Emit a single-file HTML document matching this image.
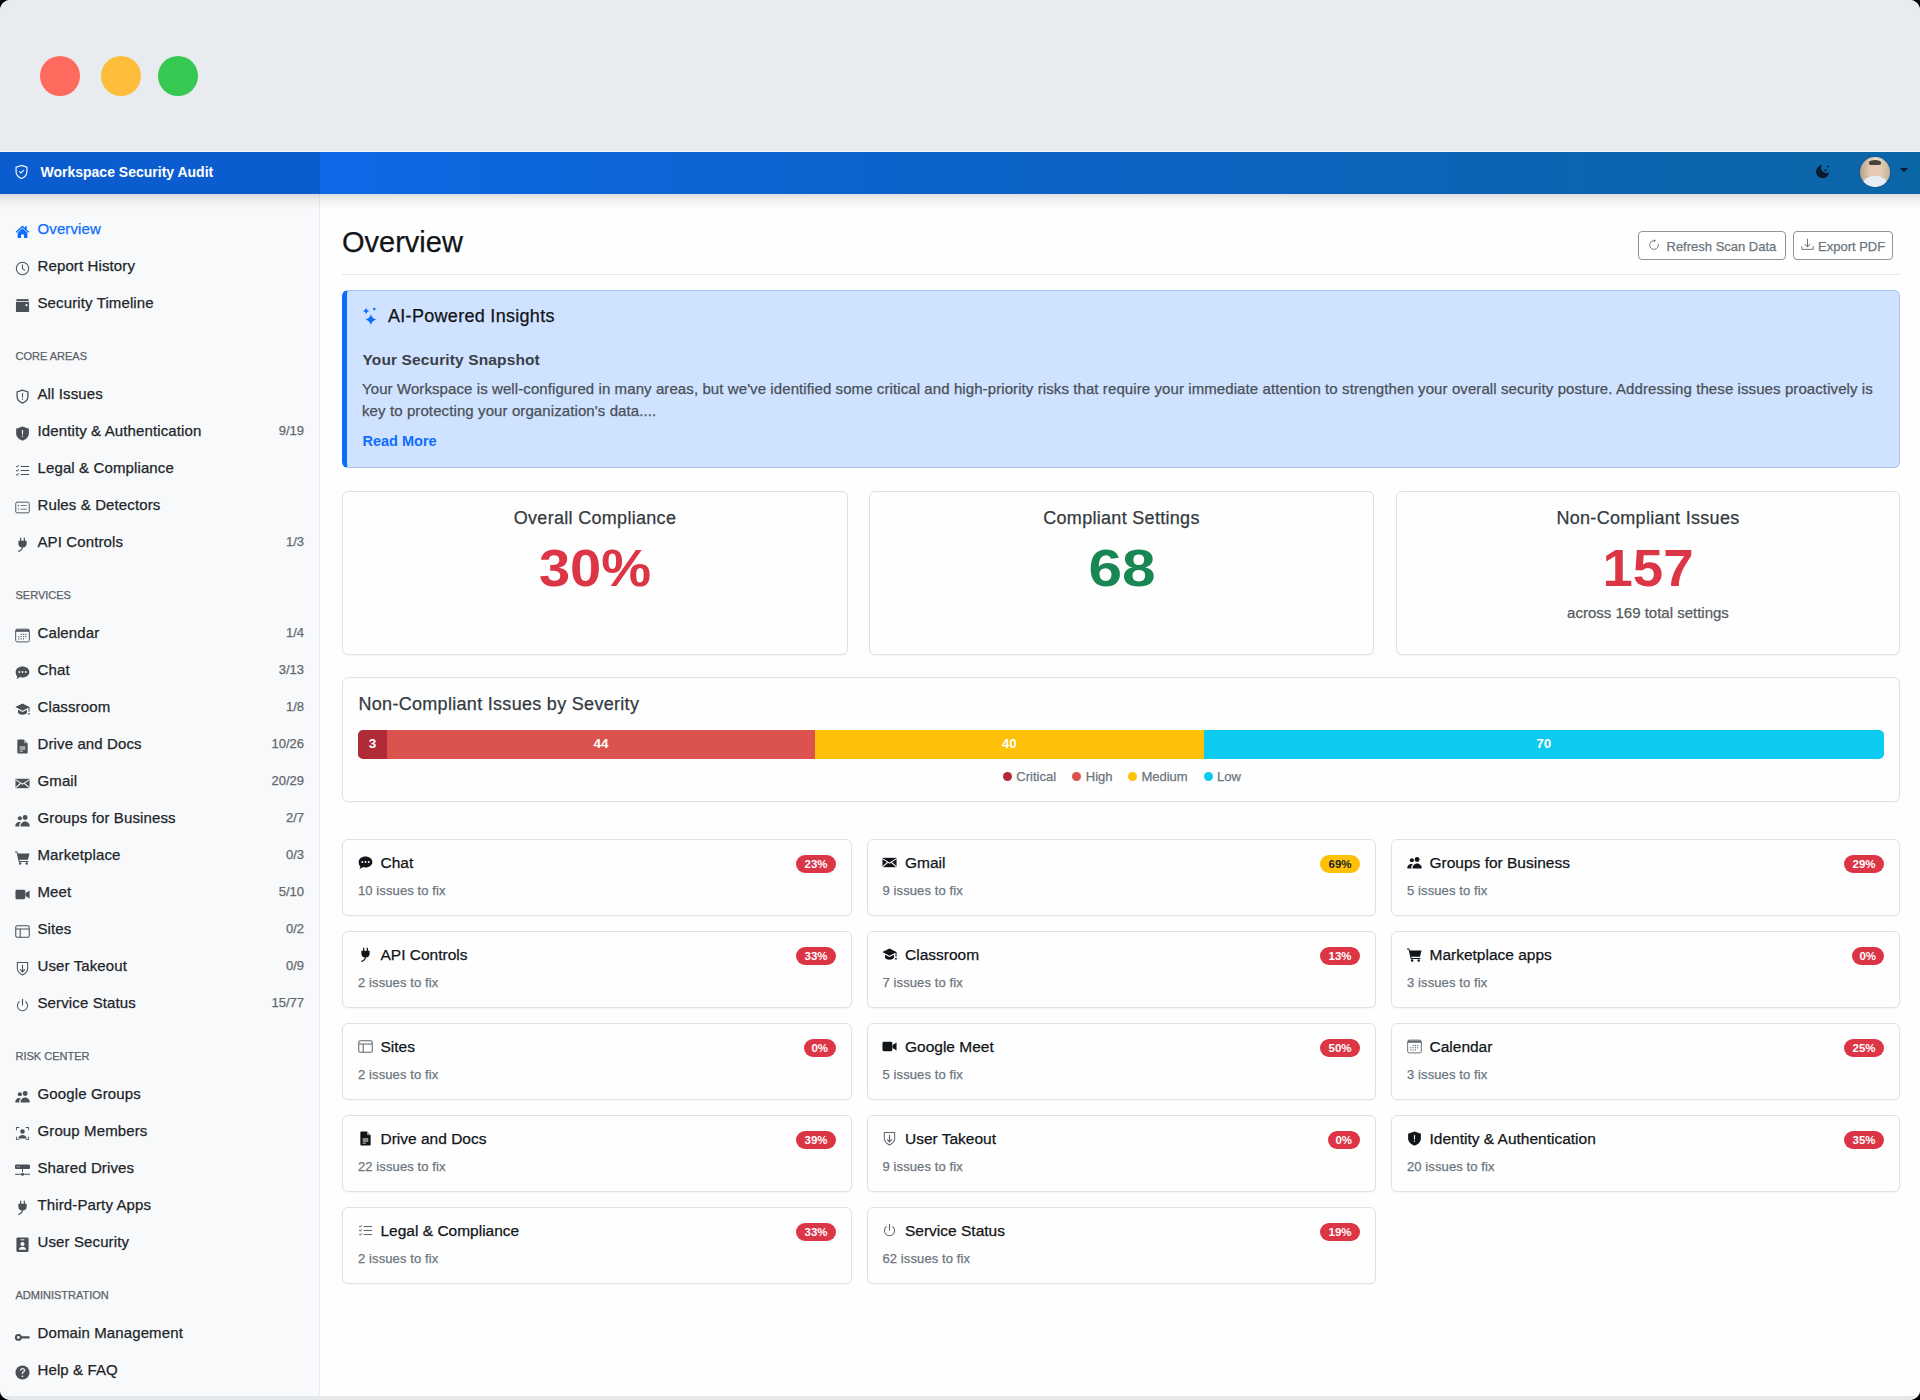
<!DOCTYPE html>
<html><head><meta charset="utf-8"><title>Workspace Security Audit</title>
<style>
*{margin:0;padding:0;box-sizing:content-box;}
html,body{width:1920px;height:1400px;overflow:hidden;background:#000;}
body{font-family:"Liberation Sans", sans-serif;}
.win{position:absolute;left:0;top:0;width:1920px;height:1400px;border-radius:10px;overflow:hidden;background:#fff;}
.t{position:absolute;white-space:nowrap;-webkit-text-stroke:0.25px currentColor;}
.b{position:absolute;}
.i{position:absolute;overflow:visible;}
</style></head><body>
<div class="win">
<div class="b" style="left:0px;top:0px;width:1920px;height:152px;background:#e8ebef;"></div>
<div class="b" style="left:39.7px;top:55.5px;width:40px;height:40px;border-radius:50%;background:#ff6a5f;"></div>
<div class="b" style="left:101.2px;top:55.5px;width:40px;height:40px;border-radius:50%;background:#febe3c;"></div>
<div class="b" style="left:157.9px;top:55.5px;width:40px;height:40px;border-radius:50%;background:#35c852;"></div>
<div class="b" style="left:0px;top:193px;width:319px;height:1203px;background:#f8f9fa;"></div>
<div class="b" style="left:319px;top:193px;width:1.5px;height:1203px;background:#eaecef;"></div>
<div class="b" style="left:320px;top:193px;width:1600px;height:1203px;background:#fefefe;"></div>
<div class="b" style="left:0px;top:1396px;width:1920px;height:4px;background:#e6e9ec;"></div>
<div class="b" style="left:0px;top:150.5px;width:1920px;height:1.5px;background:#f6f7f9;"></div>
<div class="b" style="left:0px;top:152px;width:1920px;height:41.5px;background:linear-gradient(90deg,#0d6cf5 0%,#0b63cc 45%,#0b66a6 100%);"></div>
<div class="b" style="left:0px;top:152px;width:319px;height:41.5px;background:#0b5dcf;"></div>
<div class="b" style="left:0px;top:193.5px;width:1920px;height:16px;background:linear-gradient(rgba(0,0,0,.13),rgba(0,0,0,.06) 30%,rgba(0,0,0,0));"></div>
<div class="b" style="left:319px;top:152px;width:1px;height:41.5px;background:rgba(0,0,0,.12);"></div>
<svg class="i" style="left:14px;top:164px;width:15px;height:16px;color:#ffffff;" viewBox="0 0 16 16" fill="currentColor"><path d="M8 1 2.2 2.9v4.6c0 3.5 2.5 6.1 5.8 7.5 3.3-1.4 5.8-4 5.8-7.5V2.9z" fill="none" stroke="currentColor" stroke-width="1.2"/><path d="M5.2 7.8l.8-.8 1.3 1.3 2.8-2.8.8.8-3.6 3.6z"/></svg>
<div class="t" style="left:40.5px;top:165.05px;font-size:14px;line-height:14px;color:#ffffff;font-weight:bold;letter-spacing:0px;-webkit-text-stroke:0;">Workspace Security Audit</div>
<svg class="i" style="left:1814.5px;top:163px;width:16px;height:16px;color:#0b1a2e;" viewBox="0 0 16 16" fill="currentColor"><path d="M7.19 2.01A6.6 6.6 0 1 0 14.19 9.01A5 5 0 0 1 7.19 2.01Z"/><path d="M10.4 5.4Q10.65 6.95 12.2 7.2Q10.65 7.45 10.4 9Q10.15 7.45 8.6 7.2Q10.15 6.95 10.4 5.4Z"/><circle cx="13" cy="3.4" r="0.95"/></svg>
<div class="b" style="left:1859.5px;top:156.5px;width:30px;height:30px;border-radius:50%;overflow:hidden;background:linear-gradient(90deg,#b9a184 0%,#d9c7b0 30%,#e6dccd 55%,#c7b294 100%);box-shadow:0 0 0 1px rgba(30,80,150,.6);"><div style="position:absolute;left:9px;top:4px;width:12px;height:15px;border-radius:45%;background:#e9c9b4;"></div><div style="position:absolute;left:9px;top:3px;width:12px;height:5px;border-radius:50% 50% 20% 20%;background:#4a4038;"></div><div style="position:absolute;left:3px;top:19px;width:24px;height:16px;border-radius:50% 50% 0 0;background:#e8eef6;"></div></div>
<div class="b" style="left:1900px;top:168px;width:0;height:0;border-left:4px solid transparent;border-right:4px solid transparent;border-top:4.5px solid #0b1a2e;"></div>
<svg class="i" style="left:15px;top:224.25px;width:15px;height:15px;color:#0d6efd;" viewBox="0 0 16 16" fill="currentColor"><path d="M8 1.5 0.8 8.2l1 1L8 3.6l6.2 5.6 1-1L12.5 5.8V2.5h-1.8v1.7z"/><path d="M2.8 9.2 8 4.6l5.2 4.6V14.8H9.6v-3.6H6.4v3.6H2.8z"/></svg>
<div class="t" style="left:37.5px;top:221.05px;font-size:15px;line-height:15px;color:#0d6efd;letter-spacing:0.12px;">Overview</div>
<svg class="i" style="left:15px;top:261.25px;width:15px;height:15px;color:#495057;" viewBox="0 0 16 16" fill="currentColor"><circle cx="8" cy="8" r="6.6" fill="none" stroke="currentColor" stroke-width="1.1"/><path d="M7.4 3.8h1.1v4.1l2.6 1.7-.6.9-3.1-2.1z"/></svg>
<div class="t" style="left:37.5px;top:258.05px;font-size:15px;line-height:15px;color:#212529;letter-spacing:0.12px;">Report History</div>
<svg class="i" style="left:15px;top:298.25px;width:15px;height:15px;color:#495057;" viewBox="0 0 16 16" fill="currentColor"><path d="M1.5 1.2h13v2.2h-13z"/><path d="M1 4.3h14v9.7a1 1 0 0 1-1 1H2a1 1 0 0 1-1-1z"/><circle cx="12.3" cy="7.6" r="1.1" fill="#f8f9fa"/></svg>
<div class="t" style="left:37.5px;top:295.05px;font-size:15px;line-height:15px;color:#212529;letter-spacing:0.12px;">Security Timeline</div>
<div class="t" style="left:15.5px;top:351.44px;font-size:11px;line-height:11px;color:#5a6168;letter-spacing:0px;">CORE AREAS</div>
<svg class="i" style="left:15px;top:389.25px;width:15px;height:15px;color:#495057;" viewBox="0 0 16 16" fill="currentColor"><path d="M8 1.2 2.2 3.1v4.6c0 3.4 2.5 6 5.8 7.3 3.3-1.3 5.8-3.9 5.8-7.3V3.1z" fill="none" stroke="currentColor" stroke-width="1.35"/><path d="M7.3 4.6h1.4l-.3 4.6h-.8z"/><circle cx="8" cy="10.8" r=".75"/></svg>
<div class="t" style="left:37.5px;top:386.05px;font-size:15px;line-height:15px;color:#212529;letter-spacing:0.12px;">All Issues</div>
<svg class="i" style="left:15px;top:426.25px;width:15px;height:15px;color:#495057;" viewBox="0 0 16 16" fill="currentColor"><path d="M8 .6 1.2 2.8v5c0 3.7 2.8 6.6 6.8 7.8 4-1.2 6.8-4.1 6.8-7.8v-5z"/><path d="M7.3 4.6h1.4l-.3 4.6h-.8z" fill="#f8f9fa"/><circle cx="8" cy="10.8" r=".75" fill="#f8f9fa"/></svg>
<div class="t" style="left:37.5px;top:423.05px;font-size:15px;line-height:15px;color:#212529;letter-spacing:0.12px;">Identity &amp; Authentication</div>
<div class="t" style="right:1616px;top:423.75px;font-size:13px;line-height:13px;color:#62696f;">9/19</div>
<svg class="i" style="left:15px;top:463.25px;width:15px;height:15px;color:#495057;" viewBox="0 0 16 16" fill="currentColor"><path d="M6 3.2h9v1H6zM6 7.5h9v1H6zM6 11.8h9v1H6z"/><path d="M1 3.6l.6-.6.7.7 1.6-1.6.6.6-2.2 2.2zM1 7.9l.6-.6.7.7 1.6-1.6.6.6-2.2 2.2zM1 12.2l.6-.6.7.7 1.6-1.6.6.6-2.2 2.2z"/></svg>
<div class="t" style="left:37.5px;top:460.05px;font-size:15px;line-height:15px;color:#212529;letter-spacing:0.12px;">Legal &amp; Compliance</div>
<svg class="i" style="left:15px;top:500.25px;width:15px;height:15px;color:#495057;" viewBox="0 0 16 16" fill="currentColor"><rect x="0.8" y="2.3" width="14.4" height="11.4" rx="1.4" fill="none" stroke="currentColor" stroke-width="1"/><path d="M6 5.5h6.5v1H6zM6 9.2h6.5v1H6z"/><circle cx="3.8" cy="6" r=".7"/><circle cx="3.8" cy="9.7" r=".7"/></svg>
<div class="t" style="left:37.5px;top:497.05px;font-size:15px;line-height:15px;color:#212529;letter-spacing:0.12px;">Rules &amp; Detectors</div>
<svg class="i" style="left:15px;top:537.25px;width:15px;height:15px;color:#495057;" viewBox="0 0 16 16" fill="currentColor"><path d="M5.4 .8h1.3v3.4H5.4zM9.3 .8h1.3v3.4H9.3z"/><path d="M3.6 4h8.8v2.8a4.4 4.4 0 0 1-8.8 0z"/><path d="M8 10.6c0 2.6-1.6 3.8-4.6 4.8" fill="none" stroke="currentColor" stroke-width="1.25"/></svg>
<div class="t" style="left:37.5px;top:534.05px;font-size:15px;line-height:15px;color:#212529;letter-spacing:0.12px;">API Controls</div>
<div class="t" style="right:1616px;top:534.75px;font-size:13px;line-height:13px;color:#62696f;">1/3</div>
<div class="t" style="left:15.5px;top:590.44px;font-size:11px;line-height:11px;color:#5a6168;letter-spacing:0px;">SERVICES</div>
<svg class="i" style="left:15px;top:628.25px;width:15px;height:15px;color:#495057;" viewBox="0 0 16 16" fill="currentColor"><rect x="0.7" y="1.2" width="14.6" height="13.6" rx="1.6" fill="none" stroke="currentColor" stroke-width="1"/><path d="M1 1.8h14v2.2H1z"/><g><circle cx="6.5" cy="6.8" r=".65"/><circle cx="9" cy="6.8" r=".65"/><circle cx="11.5" cy="6.8" r=".65"/><circle cx="4" cy="9.2" r=".65"/><circle cx="6.5" cy="9.2" r=".65"/><circle cx="9" cy="9.2" r=".65"/><circle cx="11.5" cy="9.2" r=".65"/><circle cx="4" cy="11.6" r=".65"/><circle cx="6.5" cy="11.6" r=".65"/><circle cx="9" cy="11.6" r=".65"/></g></svg>
<div class="t" style="left:37.5px;top:625.05px;font-size:15px;line-height:15px;color:#212529;letter-spacing:0.12px;">Calendar</div>
<div class="t" style="right:1616px;top:625.75px;font-size:13px;line-height:13px;color:#62696f;">1/4</div>
<svg class="i" style="left:15px;top:665.25px;width:15px;height:15px;color:#495057;" viewBox="0 0 16 16" fill="currentColor"><path d="M8 1.5c4.1 0 7.3 2.6 7.3 5.9S12.1 13.3 8 13.3c-.9 0-1.8-.1-2.6-.4-.9.8-2.3 1.6-4 1.8.6-.8 1-1.7 1.1-2.5C1.3 11.1.7 9.4.7 7.4.7 4.1 3.9 1.5 8 1.5z"/><circle cx="4.6" cy="7.4" r="1" fill="#f8f9fa"/><circle cx="8" cy="7.4" r="1" fill="#f8f9fa"/><circle cx="11.4" cy="7.4" r="1" fill="#f8f9fa"/></svg>
<div class="t" style="left:37.5px;top:662.05px;font-size:15px;line-height:15px;color:#212529;letter-spacing:0.12px;">Chat</div>
<div class="t" style="right:1616px;top:662.75px;font-size:13px;line-height:13px;color:#62696f;">3/13</div>
<svg class="i" style="left:15px;top:702.25px;width:15px;height:15px;color:#495057;" viewBox="0 0 16 16" fill="currentColor"><path d="M8 1.5 0.3 5.4 8 9.3l6.4-3.2v4.3h1.1V5.4z"/><path d="M3.2 8.2v2.9c0 1.1 2.1 2.5 4.8 2.5s4.8-1.4 4.8-2.5V8.2L8 10.6z"/><circle cx="14.9" cy="12.6" r="1"/></svg>
<div class="t" style="left:37.5px;top:699.05px;font-size:15px;line-height:15px;color:#212529;letter-spacing:0.12px;">Classroom</div>
<div class="t" style="right:1616px;top:699.75px;font-size:13px;line-height:13px;color:#62696f;">1/8</div>
<svg class="i" style="left:15px;top:739.25px;width:15px;height:15px;color:#495057;" viewBox="0 0 16 16" fill="currentColor"><path d="M3.5 0.5h6l4 4v10a1 1 0 0 1-1 1h-9a1 1 0 0 1-1-1v-13a1 1 0 0 1 1-1z"/><path d="M9.5 .5v3a1 1 0 0 0 1 1h3z" fill="#f8f9fa" opacity=".5"/><path d="M5 8h6v1H5zM5 10.2h6v1H5zM5 12.4h3.5v1H5z" fill="#f8f9fa"/></svg>
<div class="t" style="left:37.5px;top:736.05px;font-size:15px;line-height:15px;color:#212529;letter-spacing:0.12px;">Drive and Docs</div>
<div class="t" style="right:1616px;top:736.75px;font-size:13px;line-height:13px;color:#62696f;">10/26</div>
<svg class="i" style="left:15px;top:776.25px;width:15px;height:15px;color:#495057;" viewBox="0 0 16 16" fill="currentColor"><path d="M0.5 3h15v10h-15z"/><path d="M0.5 3.8 8 8.7l7.5-4.9M0.5 12.6l5.4-4.6M15.5 12.6l-5.4-4.6" stroke="#f8f9fa" stroke-width="1.1" fill="none"/></svg>
<div class="t" style="left:37.5px;top:773.05px;font-size:15px;line-height:15px;color:#212529;letter-spacing:0.12px;">Gmail</div>
<div class="t" style="right:1616px;top:773.75px;font-size:13px;line-height:13px;color:#62696f;">20/29</div>
<svg class="i" style="left:15px;top:813.25px;width:15px;height:15px;color:#495057;" viewBox="0 0 16 16" fill="currentColor"><circle cx="10.8" cy="4.8" r="2.6"/><circle cx="5.2" cy="5.6" r="2.2"/><path d="M6.3 14.5c-.3-.3-.4-.6-.4-1 0-1.6 1.8-4.4 4.9-4.4s4.9 2.8 4.9 4.4c0 .4-.2.7-.4 1z"/><path d="M4.8 14.5H0.7c-.3-.3-.4-.6-.4-1 0-1.5 1.5-3.8 4.4-3.8.6 0 1.1.1 1.5.2-1 .9-1.7 2.1-1.7 3.4 0 .4.1.8.3 1.2z"/></svg>
<div class="t" style="left:37.5px;top:810.05px;font-size:15px;line-height:15px;color:#212529;letter-spacing:0.12px;">Groups for Business</div>
<div class="t" style="right:1616px;top:810.75px;font-size:13px;line-height:13px;color:#62696f;">2/7</div>
<svg class="i" style="left:15px;top:850.25px;width:15px;height:15px;color:#495057;" viewBox="0 0 16 16" fill="currentColor"><path d="M0 1.5h2.4l.6 2.2h12.5l-1.7 6.8H4.6l.3 1.2h9.3v1.1H4l-2.3-10.2H0z"/><circle cx="5.5" cy="14.3" r="1.3"/><circle cx="12.5" cy="14.3" r="1.3"/></svg>
<div class="t" style="left:37.5px;top:847.05px;font-size:15px;line-height:15px;color:#212529;letter-spacing:0.12px;">Marketplace</div>
<div class="t" style="right:1616px;top:847.75px;font-size:13px;line-height:13px;color:#62696f;">0/3</div>
<svg class="i" style="left:15px;top:887.25px;width:15px;height:15px;color:#495057;" viewBox="0 0 16 16" fill="currentColor"><path d="M0.5 4.5a1.5 1.5 0 0 1 1.5-1.5h7.5a1.5 1.5 0 0 1 1.5 1.5v7a1.5 1.5 0 0 1-1.5 1.5H2a1.5 1.5 0 0 1-1.5-1.5z"/><path d="M11.3 6.3 15.5 3.8v8.4l-4.2-2.5z"/></svg>
<div class="t" style="left:37.5px;top:884.05px;font-size:15px;line-height:15px;color:#212529;letter-spacing:0.12px;">Meet</div>
<div class="t" style="right:1616px;top:884.75px;font-size:13px;line-height:13px;color:#62696f;">5/10</div>
<svg class="i" style="left:15px;top:924.25px;width:15px;height:15px;color:#495057;" viewBox="0 0 16 16" fill="currentColor"><rect x="0.8" y="1.8" width="14.4" height="12.4" rx="1.6" fill="none" stroke="currentColor" stroke-width="1.1"/><path d="M1 4.8h14v1.1H1zM5 5.3h1.1v8.7H5z"/></svg>
<div class="t" style="left:37.5px;top:921.05px;font-size:15px;line-height:15px;color:#212529;letter-spacing:0.12px;">Sites</div>
<div class="t" style="right:1616px;top:921.75px;font-size:13px;line-height:13px;color:#62696f;">0/2</div>
<svg class="i" style="left:15px;top:961.25px;width:15px;height:15px;color:#495057;" viewBox="0 0 16 16" fill="currentColor"><path d="M2.5 1.5h11v6.8c0 2.8-2.3 5-5.5 6.7-3.2-1.7-5.5-3.9-5.5-6.7z" fill="none" stroke="currentColor" stroke-width="1.1"/><path d="M7.4 4h1.2v6.2l1.6-1.6.8.8L8 12.4 5 9.4l.8-.8 1.6 1.6z"/></svg>
<div class="t" style="left:37.5px;top:958.05px;font-size:15px;line-height:15px;color:#212529;letter-spacing:0.12px;">User Takeout</div>
<div class="t" style="right:1616px;top:958.75px;font-size:13px;line-height:13px;color:#62696f;">0/9</div>
<svg class="i" style="left:15px;top:998.25px;width:15px;height:15px;color:#495057;" viewBox="0 0 16 16" fill="currentColor"><path d="M7.4 1h1.2v7H7.4z"/><path d="M4.6 3.2l.7.9A4.9 4.9 0 1 0 10.7 4.1l.7-.9a6 6 0 1 1-6.8 0z"/></svg>
<div class="t" style="left:37.5px;top:995.05px;font-size:15px;line-height:15px;color:#212529;letter-spacing:0.12px;">Service Status</div>
<div class="t" style="right:1616px;top:995.75px;font-size:13px;line-height:13px;color:#62696f;">15/77</div>
<div class="t" style="left:15.5px;top:1051.44px;font-size:11px;line-height:11px;color:#5a6168;letter-spacing:0px;">RISK CENTER</div>
<svg class="i" style="left:15px;top:1089.25px;width:15px;height:15px;color:#495057;" viewBox="0 0 16 16" fill="currentColor"><circle cx="10.8" cy="4.8" r="2.6"/><circle cx="5.2" cy="5.6" r="2.2"/><path d="M6.3 14.5c-.3-.3-.4-.6-.4-1 0-1.6 1.8-4.4 4.9-4.4s4.9 2.8 4.9 4.4c0 .4-.2.7-.4 1z"/><path d="M4.8 14.5H0.7c-.3-.3-.4-.6-.4-1 0-1.5 1.5-3.8 4.4-3.8.6 0 1.1.1 1.5.2-1 .9-1.7 2.1-1.7 3.4 0 .4.1.8.3 1.2z"/></svg>
<div class="t" style="left:37.5px;top:1086.05px;font-size:15px;line-height:15px;color:#212529;letter-spacing:0.12px;">Google Groups</div>
<svg class="i" style="left:15px;top:1126.25px;width:15px;height:15px;color:#495057;" viewBox="0 0 16 16" fill="currentColor"><path d="M1 4.5V2a1 1 0 0 1 1-1h2.5v1H2v2.5zM11.5 1H14a1 1 0 0 1 1 1v2.5h-1V2h-2.5zM1 11.5h1V14h2.5v1H2a1 1 0 0 1-1-1zM14 11.5h1V14a1 1 0 0 1-1 1h-2.5v-1H14z"/><circle cx="8" cy="5.8" r="2.4"/><path d="M3.3 13.2c.6-2.1 2.4-3.6 4.7-3.6s4.1 1.5 4.7 3.6z"/></svg>
<div class="t" style="left:37.5px;top:1123.05px;font-size:15px;line-height:15px;color:#212529;letter-spacing:0.12px;">Group Members</div>
<svg class="i" style="left:15px;top:1163.25px;width:15px;height:15px;color:#495057;" viewBox="0 0 16 16" fill="currentColor"><path d="M1.5 1.5h13a1.5 1.5 0 0 1 1.5 1.5v2a1.5 1.5 0 0 1-1.5 1.5h-13A1.5 1.5 0 0 1 0 5V3a1.5 1.5 0 0 1 1.5-1.5z"/><circle cx="2.5" cy="4" r=".6" fill="#f8f9fa"/><circle cx="4.5" cy="4" r=".6" fill="#f8f9fa"/><path d="M7.5 6.5h1v3h-1zM0 11.5h6.2v1H0zM9.8 11.5H16v1H9.8z"/><circle cx="8" cy="12" r="1.7"/></svg>
<div class="t" style="left:37.5px;top:1160.05px;font-size:15px;line-height:15px;color:#212529;letter-spacing:0.12px;">Shared Drives</div>
<svg class="i" style="left:15px;top:1200.25px;width:15px;height:15px;color:#495057;" viewBox="0 0 16 16" fill="currentColor"><path d="M5.4 .8h1.3v3.4H5.4zM9.3 .8h1.3v3.4H9.3z"/><path d="M3.6 4h8.8v2.8a4.4 4.4 0 0 1-8.8 0z"/><path d="M8 10.6c0 2.6-1.6 3.8-4.6 4.8" fill="none" stroke="currentColor" stroke-width="1.25"/></svg>
<div class="t" style="left:37.5px;top:1197.05px;font-size:15px;line-height:15px;color:#212529;letter-spacing:0.12px;">Third-Party Apps</div>
<svg class="i" style="left:15px;top:1237.25px;width:15px;height:15px;color:#495057;" viewBox="0 0 16 16" fill="currentColor"><path d="M3 0.5h10a1.5 1.5 0 0 1 1.5 1.5v12.5a1.5 1.5 0 0 1-1.5 1.5H3a1.5 1.5 0 0 1-1.5-1.5V2A1.5 1.5 0 0 1 3 .5z"/><path d="M6 2.5h4v1H6z" fill="#f8f9fa"/><circle cx="8" cy="7.5" r="2.2" fill="#f8f9fa"/><path d="M4 13.5c.4-1.8 2-3 4-3s3.6 1.2 4 3z" fill="#f8f9fa"/></svg>
<div class="t" style="left:37.5px;top:1234.05px;font-size:15px;line-height:15px;color:#212529;letter-spacing:0.12px;">User Security</div>
<div class="t" style="left:15.5px;top:1290.44px;font-size:11px;line-height:11px;color:#5a6168;letter-spacing:0px;">ADMINISTRATION</div>
<svg class="i" style="left:15px;top:1328.25px;width:15px;height:15px;color:#495057;" viewBox="0 0 16 16" fill="currentColor"><circle cx="3.6" cy="10" r="2.6" fill="none" stroke="currentColor" stroke-width="2.2"/><path d="M6 8.9h9.5v2.3H6z"/></svg>
<div class="t" style="left:37.5px;top:1325.05px;font-size:15px;line-height:15px;color:#212529;letter-spacing:0.12px;">Domain Management</div>
<svg class="i" style="left:15px;top:1365.25px;width:15px;height:15px;color:#495057;" viewBox="0 0 16 16" fill="currentColor"><circle cx="8" cy="8" r="7.5"/><path d="M5.3 6c0-1.7 1.2-2.8 2.8-2.8s2.7 1 2.7 2.4c0 1-.5 1.5-1.3 2.1-.8.5-.9.8-.9 1.5v.3H7.3v-.4c0-1 .3-1.5 1.1-2.1.7-.5 1-.8 1-1.4 0-.7-.5-1.1-1.3-1.1-.8 0-1.3.5-1.4 1.4z" fill="#f8f9fa"/><circle cx="8" cy="12" r=".9" fill="#f8f9fa"/></svg>
<div class="t" style="left:37.5px;top:1362.05px;font-size:15px;line-height:15px;color:#212529;letter-spacing:0.12px;">Help &amp; FAQ</div>
<div class="t" style="left:342px;top:227.85px;font-size:29px;line-height:29px;color:#111418;">Overview</div>
<div class="b" style="left:342px;top:274px;width:1558px;height:1px;background:#e3e6ea;"></div>
<div class="b" style="left:1638px;top:231px;width:148px;height:29px;border:1px solid #8d959c;border-radius:4px;box-sizing:border-box;background:#fff;"></div>
<div class="b" style="left:1793px;top:231px;width:100px;height:29px;border:1px solid #8d959c;border-radius:4px;box-sizing:border-box;background:#fff;"></div>
<div class="t" style="left:1666.5px;top:239.50px;font-size:13px;line-height:13px;color:#6c757d;">Refresh Scan Data</div>
<svg class="i" style="left:1647.5px;top:238.5px;width:12px;height:12px;color:#6c757d;" viewBox="0 0 16 16" fill="currentColor"><path d="M8 2.2a5.8 5.8 0 1 0 5.6 4.3" fill="none" stroke="currentColor" stroke-width="1.3"/><path d="M8 0.2v4.2l2.6-2.1z"/></svg>
<div class="t" style="left:1818px;top:239.50px;font-size:13px;line-height:13px;color:#6c757d;">Export PDF</div>
<svg class="i" style="left:1801px;top:237.5px;width:13px;height:13px;color:#6c757d;" viewBox="0 0 16 16" fill="currentColor"><path d="M1 10v4h14v-4" fill="none" stroke="currentColor" stroke-width="1.2"/><path d="M7.4 1h1.2v8.5l2.5-2.5.8.8L8 11.7 4.1 7.8l.8-.8 2.5 2.5z"/></svg>
<div class="b" style="left:342px;top:289.5px;width:1558px;height:178.5px;background:#cfe2ff;border:1px solid #a9c4ea;border-left:5px solid #0d6efd;border-radius:6px;box-sizing:border-box;"></div>
<svg class="i" style="left:362px;top:306px;width:16px;height:20px;color:#0d6efd;" viewBox="0 0 16 20" fill="currentColor"><path d="M8.9 8.2 Q10.09 12.41 14.3 13.6 Q10.09 14.79 8.9 19.0 Q7.71 14.79 3.5 13.6 Q7.71 12.41 8.9 8.2Z"/><path d="M4.1 1.9999999999999996 Q4.78 4.42 7.199999999999999 5.1 Q4.78 5.78 4.1 8.2 Q3.42 5.78 0.9999999999999996 5.1 Q3.42 4.42 4.1 1.9999999999999996Z"/><circle cx="12.25" cy="3" r="1.3"/></svg>
<div class="t" style="left:388px;top:306.76px;font-size:18px;line-height:18px;color:#111418;letter-spacing:0.3px;">AI-Powered Insights</div>
<div class="t" style="left:362.5px;top:351.88px;font-size:15.5px;line-height:15.5px;color:#3a4047;font-weight:bold;letter-spacing:0.13px;-webkit-text-stroke:0;">Your Security Snapshot</div>
<div class="t" style="left:362px;top:381.00px;font-size:15px;line-height:15px;color:#495057;letter-spacing:0.09px;white-space:nowrap;">Your Workspace is well-configured in many areas, but we've identified some critical and high-priority risks that require your immediate attention to strengthen your overall security posture. Addressing these issues proactively is</div>
<div class="t" style="left:362px;top:403.10px;font-size:15px;line-height:15px;color:#495057;letter-spacing:0.1px;">key to protecting your organization's data....</div>
<div class="t" style="left:362.5px;top:433.53px;font-size:14.5px;line-height:14.5px;color:#0d6efd;font-weight:bold;-webkit-text-stroke:0;">Read More</div>
<div class="b" style="left:342px;top:491px;width:506px;height:164px;background:#fefefe;border:1.5px solid #e0e1e2;border-radius:6px;box-sizing:border-box;box-shadow:0 1px 2px rgba(0,0,0,.04);"></div>
<div class="t" style="left:395.0px;width:400px;text-align:center;top:508.56px;font-size:18px;line-height:18px;color:#343a40;letter-spacing:0.3px;">Overall Compliance</div>
<div class="t" style="left:395.0px;width:400px;text-align:center;top:542.08px;font-size:52px;line-height:52px;color:#dc3545;font-weight:bold;-webkit-text-stroke:0;transform:scaleX(1.078);">30%</div>
<div class="b" style="left:869px;top:491px;width:505px;height:164px;background:#fefefe;border:1.5px solid #e0e1e2;border-radius:6px;box-sizing:border-box;box-shadow:0 1px 2px rgba(0,0,0,.04);"></div>
<div class="t" style="left:921.5px;width:400px;text-align:center;top:508.56px;font-size:18px;line-height:18px;color:#343a40;letter-spacing:0.3px;">Compliant Settings</div>
<div class="t" style="left:921.5px;width:400px;text-align:center;top:542.08px;font-size:52px;line-height:52px;color:#198754;font-weight:bold;-webkit-text-stroke:0;transform:scaleX(1.16);">68</div>
<div class="b" style="left:1396px;top:491px;width:504px;height:164px;background:#fefefe;border:1.5px solid #e0e1e2;border-radius:6px;box-sizing:border-box;box-shadow:0 1px 2px rgba(0,0,0,.04);"></div>
<div class="t" style="left:1448.0px;width:400px;text-align:center;top:508.56px;font-size:18px;line-height:18px;color:#343a40;letter-spacing:0.3px;">Non-Compliant Issues</div>
<div class="t" style="left:1448.0px;width:400px;text-align:center;top:542.08px;font-size:52px;line-height:52px;color:#dc3545;font-weight:bold;-webkit-text-stroke:0;transform:scaleX(1.05);">157</div>
<div class="t" style="left:1448.0px;width:400px;text-align:center;top:605.40px;font-size:15px;line-height:15px;color:#555b61;">across 169 total settings</div>
<div class="b" style="left:342px;top:677px;width:1558px;height:124.5px;background:#fefefe;border:1.5px solid #e0e1e2;border-radius:6px;box-sizing:border-box;box-shadow:0 1px 2px rgba(0,0,0,.04);"></div>
<div class="t" style="left:358.5px;top:694.76px;font-size:18px;line-height:18px;color:#343a40;letter-spacing:0.3px;">Non-Compliant Issues by Severity</div>
<div class="b" style="left:358px;top:730px;width:1526px;height:28.8px;border-radius:5px;overflow:hidden;display:flex;"><div style="width:1.9108%;height:100%;background:#b02a37;color:#fff;font-weight:bold;font-size:13.5px;line-height:27.5px;text-align:center;">3</div><div style="width:28.0255%;height:100%;background:#dc524e;color:#fff;font-weight:bold;font-size:13.5px;line-height:27.5px;text-align:center;">44</div><div style="width:25.4777%;height:100%;background:#ffc107;color:#fff;font-weight:bold;font-size:13.5px;line-height:27.5px;text-align:center;">40</div><div style="width:44.5860%;height:100%;background:#0dcaf0;color:#fff;font-weight:bold;font-size:13.5px;line-height:27.5px;text-align:center;">70</div></div>
<div class="b" style="left:1002.8px;top:771.5px;width:9px;height:9px;border-radius:50%;background:#b02a37;"></div>
<div class="t" style="left:1016.3px;top:770.30px;font-size:13px;line-height:13px;color:#6c757d;">Critical</div>
<div class="b" style="left:1072.3px;top:771.5px;width:9px;height:9px;border-radius:50%;background:#dc524e;"></div>
<div class="t" style="left:1085.8px;top:770.30px;font-size:13px;line-height:13px;color:#6c757d;">High</div>
<div class="b" style="left:1127.9px;top:771.5px;width:9px;height:9px;border-radius:50%;background:#ffc107;"></div>
<div class="t" style="left:1141.4px;top:770.30px;font-size:13px;line-height:13px;color:#6c757d;">Medium</div>
<div class="b" style="left:1203.5px;top:771.5px;width:9px;height:9px;border-radius:50%;background:#0dcaf0;"></div>
<div class="t" style="left:1217px;top:770.30px;font-size:13px;line-height:13px;color:#6c757d;">Low</div>
<div class="b" style="left:342px;top:839px;width:510px;height:77px;background:#fefefe;border:1.5px solid #e0e1e2;border-radius:6px;box-sizing:border-box;box-shadow:0 1px 2px rgba(0,0,0,.04);"></div>
<svg class="i" style="left:357.5px;top:855.2px;width:15px;height:15px;color:#111418;" viewBox="0 0 16 16" fill="currentColor"><path d="M8 1.5c4.1 0 7.3 2.6 7.3 5.9S12.1 13.3 8 13.3c-.9 0-1.8-.1-2.6-.4-.9.8-2.3 1.6-4 1.8.6-.8 1-1.7 1.1-2.5C1.3 11.1.7 9.4.7 7.4.7 4.1 3.9 1.5 8 1.5z"/><circle cx="4.6" cy="7.4" r="1" fill="#ffffff"/><circle cx="8" cy="7.4" r="1" fill="#ffffff"/><circle cx="11.4" cy="7.4" r="1" fill="#ffffff"/></svg>
<div class="t" style="left:380.5px;top:855.28px;font-size:15.5px;line-height:15.5px;color:#111418;">Chat</div>
<div class="t" style="left:358px;top:884.00px;font-size:13px;line-height:13px;color:#6c757d;letter-spacing:0.1px;">10 issues to fix</div>
<div class="b" style="left:796px;top:854.6px;width:40px;height:18px;border-radius:9px;background:#dc3545;color:#fff;font-weight:bold;font-size:11.5px;line-height:18px;text-align:center;">23%</div>
<div class="b" style="left:866.5px;top:839px;width:509.5px;height:77px;background:#fefefe;border:1.5px solid #e0e1e2;border-radius:6px;box-sizing:border-box;box-shadow:0 1px 2px rgba(0,0,0,.04);"></div>
<svg class="i" style="left:882.0px;top:855.2px;width:15px;height:15px;color:#111418;" viewBox="0 0 16 16" fill="currentColor"><path d="M0.5 3h15v10h-15z"/><path d="M0.5 3.8 8 8.7l7.5-4.9M0.5 12.6l5.4-4.6M15.5 12.6l-5.4-4.6" stroke="#ffffff" stroke-width="1.1" fill="none"/></svg>
<div class="t" style="left:905.0px;top:855.28px;font-size:15.5px;line-height:15.5px;color:#111418;">Gmail</div>
<div class="t" style="left:882.5px;top:884.00px;font-size:13px;line-height:13px;color:#6c757d;letter-spacing:0.1px;">9 issues to fix</div>
<div class="b" style="left:1320px;top:854.6px;width:40px;height:18px;border-radius:9px;background:#ffc107;color:#212529;font-weight:bold;font-size:11.5px;line-height:18px;text-align:center;">69%</div>
<div class="b" style="left:1391px;top:839px;width:509px;height:77px;background:#fefefe;border:1.5px solid #e0e1e2;border-radius:6px;box-sizing:border-box;box-shadow:0 1px 2px rgba(0,0,0,.04);"></div>
<svg class="i" style="left:1406.5px;top:855.2px;width:15px;height:15px;color:#111418;" viewBox="0 0 16 16" fill="currentColor"><circle cx="10.8" cy="4.8" r="2.6"/><circle cx="5.2" cy="5.6" r="2.2"/><path d="M6.3 14.5c-.3-.3-.4-.6-.4-1 0-1.6 1.8-4.4 4.9-4.4s4.9 2.8 4.9 4.4c0 .4-.2.7-.4 1z"/><path d="M4.8 14.5H0.7c-.3-.3-.4-.6-.4-1 0-1.5 1.5-3.8 4.4-3.8.6 0 1.1.1 1.5.2-1 .9-1.7 2.1-1.7 3.4 0 .4.1.8.3 1.2z"/></svg>
<div class="t" style="left:1429.5px;top:855.28px;font-size:15.5px;line-height:15.5px;color:#111418;">Groups for Business</div>
<div class="t" style="left:1407px;top:884.00px;font-size:13px;line-height:13px;color:#6c757d;letter-spacing:0.1px;">5 issues to fix</div>
<div class="b" style="left:1844px;top:854.6px;width:40px;height:18px;border-radius:9px;background:#dc3545;color:#fff;font-weight:bold;font-size:11.5px;line-height:18px;text-align:center;">29%</div>
<div class="b" style="left:342px;top:931px;width:510px;height:77px;background:#fefefe;border:1.5px solid #e0e1e2;border-radius:6px;box-sizing:border-box;box-shadow:0 1px 2px rgba(0,0,0,.04);"></div>
<svg class="i" style="left:357.5px;top:947.2px;width:15px;height:15px;color:#111418;" viewBox="0 0 16 16" fill="currentColor"><path d="M5.4 .8h1.3v3.4H5.4zM9.3 .8h1.3v3.4H9.3z"/><path d="M3.6 4h8.8v2.8a4.4 4.4 0 0 1-8.8 0z"/><path d="M8 10.6c0 2.6-1.6 3.8-4.6 4.8" fill="none" stroke="currentColor" stroke-width="1.25"/></svg>
<div class="t" style="left:380.5px;top:947.28px;font-size:15.5px;line-height:15.5px;color:#111418;">API Controls</div>
<div class="t" style="left:358px;top:976.00px;font-size:13px;line-height:13px;color:#6c757d;letter-spacing:0.1px;">2 issues to fix</div>
<div class="b" style="left:796px;top:946.6px;width:40px;height:18px;border-radius:9px;background:#dc3545;color:#fff;font-weight:bold;font-size:11.5px;line-height:18px;text-align:center;">33%</div>
<div class="b" style="left:866.5px;top:931px;width:509.5px;height:77px;background:#fefefe;border:1.5px solid #e0e1e2;border-radius:6px;box-sizing:border-box;box-shadow:0 1px 2px rgba(0,0,0,.04);"></div>
<svg class="i" style="left:882.0px;top:947.2px;width:15px;height:15px;color:#111418;" viewBox="0 0 16 16" fill="currentColor"><path d="M8 1.5 0.3 5.4 8 9.3l6.4-3.2v4.3h1.1V5.4z"/><path d="M3.2 8.2v2.9c0 1.1 2.1 2.5 4.8 2.5s4.8-1.4 4.8-2.5V8.2L8 10.6z"/><circle cx="14.9" cy="12.6" r="1"/></svg>
<div class="t" style="left:905.0px;top:947.28px;font-size:15.5px;line-height:15.5px;color:#111418;">Classroom</div>
<div class="t" style="left:882.5px;top:976.00px;font-size:13px;line-height:13px;color:#6c757d;letter-spacing:0.1px;">7 issues to fix</div>
<div class="b" style="left:1320px;top:946.6px;width:40px;height:18px;border-radius:9px;background:#dc3545;color:#fff;font-weight:bold;font-size:11.5px;line-height:18px;text-align:center;">13%</div>
<div class="b" style="left:1391px;top:931px;width:509px;height:77px;background:#fefefe;border:1.5px solid #e0e1e2;border-radius:6px;box-sizing:border-box;box-shadow:0 1px 2px rgba(0,0,0,.04);"></div>
<svg class="i" style="left:1406.5px;top:947.2px;width:15px;height:15px;color:#111418;" viewBox="0 0 16 16" fill="currentColor"><path d="M0 1.5h2.4l.6 2.2h12.5l-1.7 6.8H4.6l.3 1.2h9.3v1.1H4l-2.3-10.2H0z"/><circle cx="5.5" cy="14.3" r="1.3"/><circle cx="12.5" cy="14.3" r="1.3"/></svg>
<div class="t" style="left:1429.5px;top:947.28px;font-size:15.5px;line-height:15.5px;color:#111418;">Marketplace apps</div>
<div class="t" style="left:1407px;top:976.00px;font-size:13px;line-height:13px;color:#6c757d;letter-spacing:0.1px;">3 issues to fix</div>
<div class="b" style="left:1851.5px;top:946.6px;width:32.5px;height:18px;border-radius:9px;background:#dc3545;color:#fff;font-weight:bold;font-size:11.5px;line-height:18px;text-align:center;">0%</div>
<div class="b" style="left:342px;top:1023px;width:510px;height:77px;background:#fefefe;border:1.5px solid #e0e1e2;border-radius:6px;box-sizing:border-box;box-shadow:0 1px 2px rgba(0,0,0,.04);"></div>
<svg class="i" style="left:357.5px;top:1039.2px;width:15px;height:15px;color:#5f666d;" viewBox="0 0 16 16" fill="currentColor"><rect x="0.8" y="1.8" width="14.4" height="12.4" rx="1.6" fill="none" stroke="currentColor" stroke-width="1.1"/><path d="M1 4.8h14v1.1H1zM5 5.3h1.1v8.7H5z"/></svg>
<div class="t" style="left:380.5px;top:1039.28px;font-size:15.5px;line-height:15.5px;color:#111418;">Sites</div>
<div class="t" style="left:358px;top:1068.00px;font-size:13px;line-height:13px;color:#6c757d;letter-spacing:0.1px;">2 issues to fix</div>
<div class="b" style="left:803.5px;top:1038.6px;width:32.5px;height:18px;border-radius:9px;background:#dc3545;color:#fff;font-weight:bold;font-size:11.5px;line-height:18px;text-align:center;">0%</div>
<div class="b" style="left:866.5px;top:1023px;width:509.5px;height:77px;background:#fefefe;border:1.5px solid #e0e1e2;border-radius:6px;box-sizing:border-box;box-shadow:0 1px 2px rgba(0,0,0,.04);"></div>
<svg class="i" style="left:882.0px;top:1039.2px;width:15px;height:15px;color:#111418;" viewBox="0 0 16 16" fill="currentColor"><path d="M0.5 4.5a1.5 1.5 0 0 1 1.5-1.5h7.5a1.5 1.5 0 0 1 1.5 1.5v7a1.5 1.5 0 0 1-1.5 1.5H2a1.5 1.5 0 0 1-1.5-1.5z"/><path d="M11.3 6.3 15.5 3.8v8.4l-4.2-2.5z"/></svg>
<div class="t" style="left:905.0px;top:1039.28px;font-size:15.5px;line-height:15.5px;color:#111418;">Google Meet</div>
<div class="t" style="left:882.5px;top:1068.00px;font-size:13px;line-height:13px;color:#6c757d;letter-spacing:0.1px;">5 issues to fix</div>
<div class="b" style="left:1320px;top:1038.6px;width:40px;height:18px;border-radius:9px;background:#dc3545;color:#fff;font-weight:bold;font-size:11.5px;line-height:18px;text-align:center;">50%</div>
<div class="b" style="left:1391px;top:1023px;width:509px;height:77px;background:#fefefe;border:1.5px solid #e0e1e2;border-radius:6px;box-sizing:border-box;box-shadow:0 1px 2px rgba(0,0,0,.04);"></div>
<svg class="i" style="left:1406.5px;top:1039.2px;width:15px;height:15px;color:#5f666d;" viewBox="0 0 16 16" fill="currentColor"><rect x="0.7" y="1.2" width="14.6" height="13.6" rx="1.6" fill="none" stroke="currentColor" stroke-width="1"/><path d="M1 1.8h14v2.2H1z"/><g><circle cx="6.5" cy="6.8" r=".65"/><circle cx="9" cy="6.8" r=".65"/><circle cx="11.5" cy="6.8" r=".65"/><circle cx="4" cy="9.2" r=".65"/><circle cx="6.5" cy="9.2" r=".65"/><circle cx="9" cy="9.2" r=".65"/><circle cx="11.5" cy="9.2" r=".65"/><circle cx="4" cy="11.6" r=".65"/><circle cx="6.5" cy="11.6" r=".65"/><circle cx="9" cy="11.6" r=".65"/></g></svg>
<div class="t" style="left:1429.5px;top:1039.28px;font-size:15.5px;line-height:15.5px;color:#111418;">Calendar</div>
<div class="t" style="left:1407px;top:1068.00px;font-size:13px;line-height:13px;color:#6c757d;letter-spacing:0.1px;">3 issues to fix</div>
<div class="b" style="left:1844px;top:1038.6px;width:40px;height:18px;border-radius:9px;background:#dc3545;color:#fff;font-weight:bold;font-size:11.5px;line-height:18px;text-align:center;">25%</div>
<div class="b" style="left:342px;top:1115px;width:510px;height:77px;background:#fefefe;border:1.5px solid #e0e1e2;border-radius:6px;box-sizing:border-box;box-shadow:0 1px 2px rgba(0,0,0,.04);"></div>
<svg class="i" style="left:357.5px;top:1131.2px;width:15px;height:15px;color:#111418;" viewBox="0 0 16 16" fill="currentColor"><path d="M3.5 0.5h6l4 4v10a1 1 0 0 1-1 1h-9a1 1 0 0 1-1-1v-13a1 1 0 0 1 1-1z"/><path d="M9.5 .5v3a1 1 0 0 0 1 1h3z" fill="#ffffff" opacity=".5"/><path d="M5 8h6v1H5zM5 10.2h6v1H5zM5 12.4h3.5v1H5z" fill="#ffffff"/></svg>
<div class="t" style="left:380.5px;top:1131.28px;font-size:15.5px;line-height:15.5px;color:#111418;">Drive and Docs</div>
<div class="t" style="left:358px;top:1160.00px;font-size:13px;line-height:13px;color:#6c757d;letter-spacing:0.1px;">22 issues to fix</div>
<div class="b" style="left:796px;top:1130.6px;width:40px;height:18px;border-radius:9px;background:#dc3545;color:#fff;font-weight:bold;font-size:11.5px;line-height:18px;text-align:center;">39%</div>
<div class="b" style="left:866.5px;top:1115px;width:509.5px;height:77px;background:#fefefe;border:1.5px solid #e0e1e2;border-radius:6px;box-sizing:border-box;box-shadow:0 1px 2px rgba(0,0,0,.04);"></div>
<svg class="i" style="left:882.0px;top:1131.2px;width:15px;height:15px;color:#5f666d;" viewBox="0 0 16 16" fill="currentColor"><path d="M2.5 1.5h11v6.8c0 2.8-2.3 5-5.5 6.7-3.2-1.7-5.5-3.9-5.5-6.7z" fill="none" stroke="currentColor" stroke-width="1.1"/><path d="M7.4 4h1.2v6.2l1.6-1.6.8.8L8 12.4 5 9.4l.8-.8 1.6 1.6z"/></svg>
<div class="t" style="left:905.0px;top:1131.28px;font-size:15.5px;line-height:15.5px;color:#111418;">User Takeout</div>
<div class="t" style="left:882.5px;top:1160.00px;font-size:13px;line-height:13px;color:#6c757d;letter-spacing:0.1px;">9 issues to fix</div>
<div class="b" style="left:1327.5px;top:1130.6px;width:32.5px;height:18px;border-radius:9px;background:#dc3545;color:#fff;font-weight:bold;font-size:11.5px;line-height:18px;text-align:center;">0%</div>
<div class="b" style="left:1391px;top:1115px;width:509px;height:77px;background:#fefefe;border:1.5px solid #e0e1e2;border-radius:6px;box-sizing:border-box;box-shadow:0 1px 2px rgba(0,0,0,.04);"></div>
<svg class="i" style="left:1406.5px;top:1131.2px;width:15px;height:15px;color:#111418;" viewBox="0 0 16 16" fill="currentColor"><path d="M8 .6 1.2 2.8v5c0 3.7 2.8 6.6 6.8 7.8 4-1.2 6.8-4.1 6.8-7.8v-5z"/><path d="M7.3 4.6h1.4l-.3 4.6h-.8z" fill="#ffffff"/><circle cx="8" cy="10.8" r=".75" fill="#ffffff"/></svg>
<div class="t" style="left:1429.5px;top:1131.28px;font-size:15.5px;line-height:15.5px;color:#111418;">Identity &amp; Authentication</div>
<div class="t" style="left:1407px;top:1160.00px;font-size:13px;line-height:13px;color:#6c757d;letter-spacing:0.1px;">20 issues to fix</div>
<div class="b" style="left:1844px;top:1130.6px;width:40px;height:18px;border-radius:9px;background:#dc3545;color:#fff;font-weight:bold;font-size:11.5px;line-height:18px;text-align:center;">35%</div>
<div class="b" style="left:342px;top:1207px;width:510px;height:77px;background:#fefefe;border:1.5px solid #e0e1e2;border-radius:6px;box-sizing:border-box;box-shadow:0 1px 2px rgba(0,0,0,.04);"></div>
<svg class="i" style="left:357.5px;top:1223.2px;width:15px;height:15px;color:#5f666d;" viewBox="0 0 16 16" fill="currentColor"><path d="M6 3.2h9v1H6zM6 7.5h9v1H6zM6 11.8h9v1H6z"/><path d="M1 3.6l.6-.6.7.7 1.6-1.6.6.6-2.2 2.2zM1 7.9l.6-.6.7.7 1.6-1.6.6.6-2.2 2.2zM1 12.2l.6-.6.7.7 1.6-1.6.6.6-2.2 2.2z"/></svg>
<div class="t" style="left:380.5px;top:1223.28px;font-size:15.5px;line-height:15.5px;color:#111418;">Legal &amp; Compliance</div>
<div class="t" style="left:358px;top:1252.00px;font-size:13px;line-height:13px;color:#6c757d;letter-spacing:0.1px;">2 issues to fix</div>
<div class="b" style="left:796px;top:1222.6px;width:40px;height:18px;border-radius:9px;background:#dc3545;color:#fff;font-weight:bold;font-size:11.5px;line-height:18px;text-align:center;">33%</div>
<div class="b" style="left:866.5px;top:1207px;width:509.5px;height:77px;background:#fefefe;border:1.5px solid #e0e1e2;border-radius:6px;box-sizing:border-box;box-shadow:0 1px 2px rgba(0,0,0,.04);"></div>
<svg class="i" style="left:882.0px;top:1223.2px;width:15px;height:15px;color:#5f666d;" viewBox="0 0 16 16" fill="currentColor"><path d="M7.4 1h1.2v7H7.4z"/><path d="M4.6 3.2l.7.9A4.9 4.9 0 1 0 10.7 4.1l.7-.9a6 6 0 1 1-6.8 0z"/></svg>
<div class="t" style="left:905.0px;top:1223.28px;font-size:15.5px;line-height:15.5px;color:#111418;">Service Status</div>
<div class="t" style="left:882.5px;top:1252.00px;font-size:13px;line-height:13px;color:#6c757d;letter-spacing:0.1px;">62 issues to fix</div>
<div class="b" style="left:1320px;top:1222.6px;width:40px;height:18px;border-radius:9px;background:#dc3545;color:#fff;font-weight:bold;font-size:11.5px;line-height:18px;text-align:center;">19%</div>
</div>
</body></html>
